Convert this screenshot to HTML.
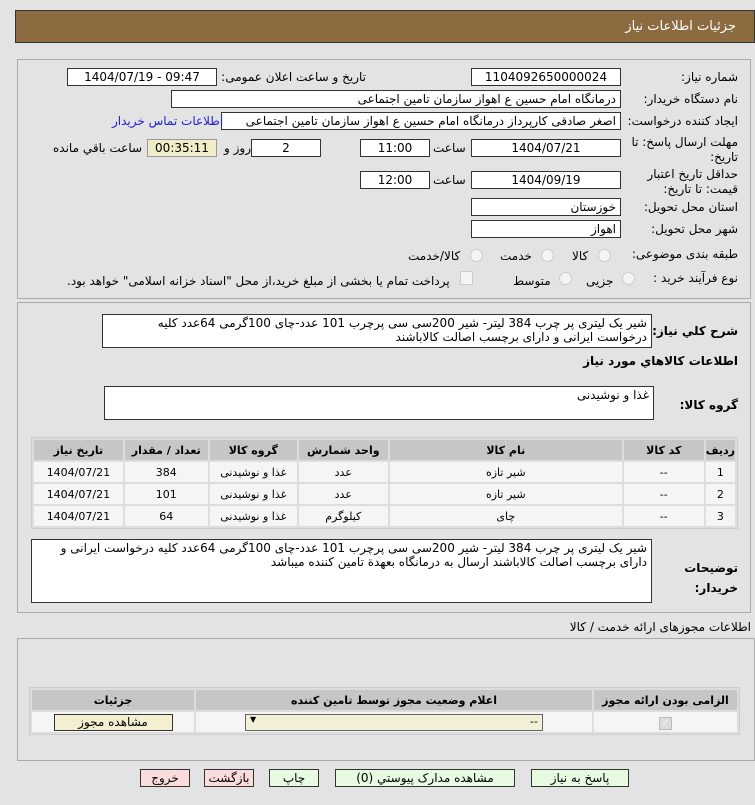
<!DOCTYPE html>
<html><head><meta charset="utf-8"><style>
body{margin:0;width:755px;height:805px;background:#e3e3e3;font-family:"DejaVu Sans","Liberation Sans",sans-serif;font-size:11px;color:#000;position:relative;overflow:hidden}
.a{position:absolute}
.hd{left:15px;top:10px;width:740px;height:33px;background:#8b6b3f;border:1px solid #333;box-sizing:border-box;color:#fff;font-size:13px}
.pn{border:1px solid #aaa;box-sizing:border-box}
.in{background:#fff;border:1px solid #333;box-sizing:border-box;direction:rtl;padding:1px 4px;white-space:nowrap;overflow:hidden;font-size:12px}
.c{text-align:center;direction:ltr}
.l{direction:rtl;text-align:right;white-space:nowrap;font-size:12px}
.b{font-weight:bold}
table{border-collapse:separate;border-spacing:2px;background:#ddd;border:1px solid #ccc}
td,th{text-align:center;font-size:11px;height:20px;padding:0}
th{background:#c6c6c6}
td{background:#f5f5f5}
.rad{width:11px;height:11px;border-radius:50%;border:1px solid #ccc;background:#f4f4f4}
.btn{border:1px solid #333;box-sizing:border-box;text-align:center;font-size:12px;line-height:16px;height:18px;top:769px}
</style></head><body>
<div class="a hd"><span class="a" style="right:18px;top:8px">جزئیات اطلاعات نیاز</span></div>
<div class="a pn" style="left:17px;top:59px;width:734px;height:240px"></div>
<div class="a pn" style="left:17px;top:302px;width:734px;height:311px"></div>

<div class="a l" style="right:17px;top:70px">شماره نیاز:</div>
<div class="a in c" style="left:471px;top:68px;width:150px;height:18px">1104092650000024</div>
<div class="a l" style="right:389px;top:70px">تاریخ و ساعت اعلان عمومی:</div>
<div class="a in c" style="left:67px;top:68px;width:150px;height:18px">1404/07/19 - 09:47</div>

<div class="a l" style="right:17px;top:92px">نام دستگاه خریدار:</div>
<div class="a in" style="left:171px;top:90px;width:450px;height:18px">درمانگاه امام حسین  ع  اهواز سازمان تامین اجتماعی</div>

<div class="a l" style="right:17px;top:114px">ایجاد کننده درخواست:</div>
<div class="a in" style="left:221px;top:112px;width:400px;height:18px">اصغر صادقی کارپرداز درمانگاه امام حسین  ع  اهواز سازمان تامین اجتماعی</div>
<div class="a l" style="left:112px;top:114px;color:#2020d0">اطلاعات تماس خریدار</div>

<div class="a l" style="right:17px;top:135px;line-height:15px">مهلت ارسال پاسخ: تا<br>تاریخ:</div>
<div class="a in c" style="left:471px;top:139px;width:150px;height:18px">1404/07/21</div>
<div class="a l" style="left:433px;top:141px">ساعت</div>
<div class="a in c" style="left:360px;top:139px;width:70px;height:18px">11:00</div>
<div class="a in c" style="left:251px;top:139px;width:70px;height:18px">2</div>
<div class="a l" style="left:224px;top:141px">روز و</div>
<div class="a in c" style="left:147px;top:139px;width:70px;height:18px;background:#f0ecc8;border-color:#999">00:35:11</div>
<div class="a l" style="left:53px;top:141px">ساعت باقي مانده</div>

<div class="a l" style="right:17px;top:167px;line-height:15px">حداقل تاریخ اعتبار<br>قیمت: تا تاریخ:</div>
<div class="a in c" style="left:471px;top:171px;width:150px;height:18px">1404/09/19</div>
<div class="a l" style="left:433px;top:173px">ساعت</div>
<div class="a in c" style="left:360px;top:171px;width:70px;height:18px">12:00</div>

<div class="a l" style="right:17px;top:200px">استان محل تحویل:</div>
<div class="a in" style="left:471px;top:198px;width:150px;height:18px">خوزستان</div>
<div class="a l" style="right:17px;top:222px">شهر محل تحویل:</div>
<div class="a in" style="left:471px;top:220px;width:150px;height:18px">اهواز</div>

<div class="a l" style="right:17px;top:247px">طبقه بندی موضوعی:</div>
<div class="a rad" style="left:598px;top:249px"></div><div class="a l" style="left:572px;top:249px">کالا</div>
<div class="a rad" style="left:541px;top:249px"></div><div class="a l" style="left:500px;top:249px">خدمت</div>
<div class="a rad" style="left:470px;top:249px"></div><div class="a l" style="left:408px;top:249px">کالا/خدمت</div>

<div class="a l" style="right:17px;top:271px">نوع فرآیند خرید :</div>
<div class="a rad" style="left:622px;top:272px"></div><div class="a l" style="left:586px;top:274px">جزیی</div>
<div class="a rad" style="left:559px;top:272px"></div><div class="a l" style="left:513px;top:274px">متوسط</div>
<div class="a" style="left:460px;top:271px;width:11px;height:12px;border:1px solid #ccc;background:#f4f4f4"></div>
<div class="a l" style="left:67px;top:274px">پرداخت تمام یا بخشی از مبلغ خرید،از محل "اسناد خزانه اسلامی" خواهد بود.</div>

<div class="a l b" style="right:17px;top:324px">شرح كلي نياز:</div>
<div class="a in" style="left:102px;top:314px;width:550px;height:34px;white-space:normal;line-height:14px">شیر یک لیتری پر چرب 384 لیتر- شیر 200سی سی پرچرب 101 عدد-چای 100گرمی 64عدد کلیه درخواست ایرانی و دارای برچسب اصالت کالاباشند</div>
<div class="a l b" style="right:17px;top:354px">اطلاعات كالاهاي مورد نياز</div>
<div class="a l b" style="right:17px;top:398px">گروه کالا:</div>
<div class="a in" style="left:104px;top:386px;width:550px;height:34px">غذا و نوشیدنی</div>

<table class="a" style="left:31px;top:437px;width:707px;direction:rtl">
<tr><th style="width:27px">ردیف</th><th style="width:80px">کد کالا</th><th style="width:232px">نام کالا</th><th style="width:89px">واحد شمارش</th><th style="width:87px">گروه کالا</th><th style="width:83px">تعداد / مقدار</th><th>تاریخ نیاز</th></tr>
<tr><td>1</td><td>--</td><td>شیر تازه</td><td>عدد</td><td>غذا و نوشیدنی</td><td>384</td><td>1404/07/21</td></tr>
<tr><td>2</td><td>--</td><td>شیر تازه</td><td>عدد</td><td>غذا و نوشیدنی</td><td>101</td><td>1404/07/21</td></tr>
<tr><td>3</td><td>--</td><td>چای</td><td>کیلوگرم</td><td>غذا و نوشیدنی</td><td>64</td><td>1404/07/21</td></tr>
</table>

<div class="a l b" style="right:17px;top:558px;line-height:20px">توضیحات<br>خریدار:</div>
<div class="a in" style="left:31px;top:539px;width:621px;height:64px;white-space:normal;line-height:14px">شیر یک لیتری پر چرب 384 لیتر- شیر 200سی سی پرچرب 101 عدد-چای 100گرمی 64عدد کلیه درخواست ایرانی و دارای برچسب اصالت کالاباشند ارسال به درمانگاه بعهدة تامین کننده میباشد</div>

<div class="a l" style="right:4px;top:620px">اطلاعات مجوزهای ارائه خدمت / کالا</div>
<div class="a pn" style="left:17px;top:638px;width:738px;height:123px"></div>
<table class="a" style="left:29px;top:687px;width:711px;direction:rtl">
<tr><th style="width:143px">الزامی بودن ارائه مجوز</th><th style="width:396px">اعلام وضعیت مجوز توسط تامین کننده</th><th>جزئیات</th></tr>
<tr><td><span style="display:inline-block;width:11px;height:11px;background:#ddd;border:1px solid #bbb;color:#fff;font-size:9px;line-height:11px">✓</span></td>
<td><div style="margin:0 auto;width:298px;height:17px;background:#f2f0d8;border:1px solid #666;box-sizing:border-box;text-align:right;padding:0 4px;position:relative">--<span style="position:absolute;left:4px;font-size:8px">&#9660;</span></div></td>
<td><div style="margin:0 auto;width:119px;height:17px;background:#f2f0d0;border:1px solid #333;box-sizing:border-box;font-size:12px">مشاهده مجوز</div></td></tr>
</table>

<div class="a btn" style="left:531px;width:98px;background:#e6fbe0">پاسخ به نیاز</div>
<div class="a btn" style="left:335px;width:180px;background:#e6fbe0">مشاهده مدارک پیوستي (0)</div>
<div class="a btn" style="left:269px;width:50px;background:#e6fbe0">چاپ</div>
<div class="a btn" style="left:204px;width:50px;background:#fbdcdc">بازگشت</div>
<div class="a btn" style="left:140px;width:50px;background:#fbdcdc">خروج</div>
</body></html>
